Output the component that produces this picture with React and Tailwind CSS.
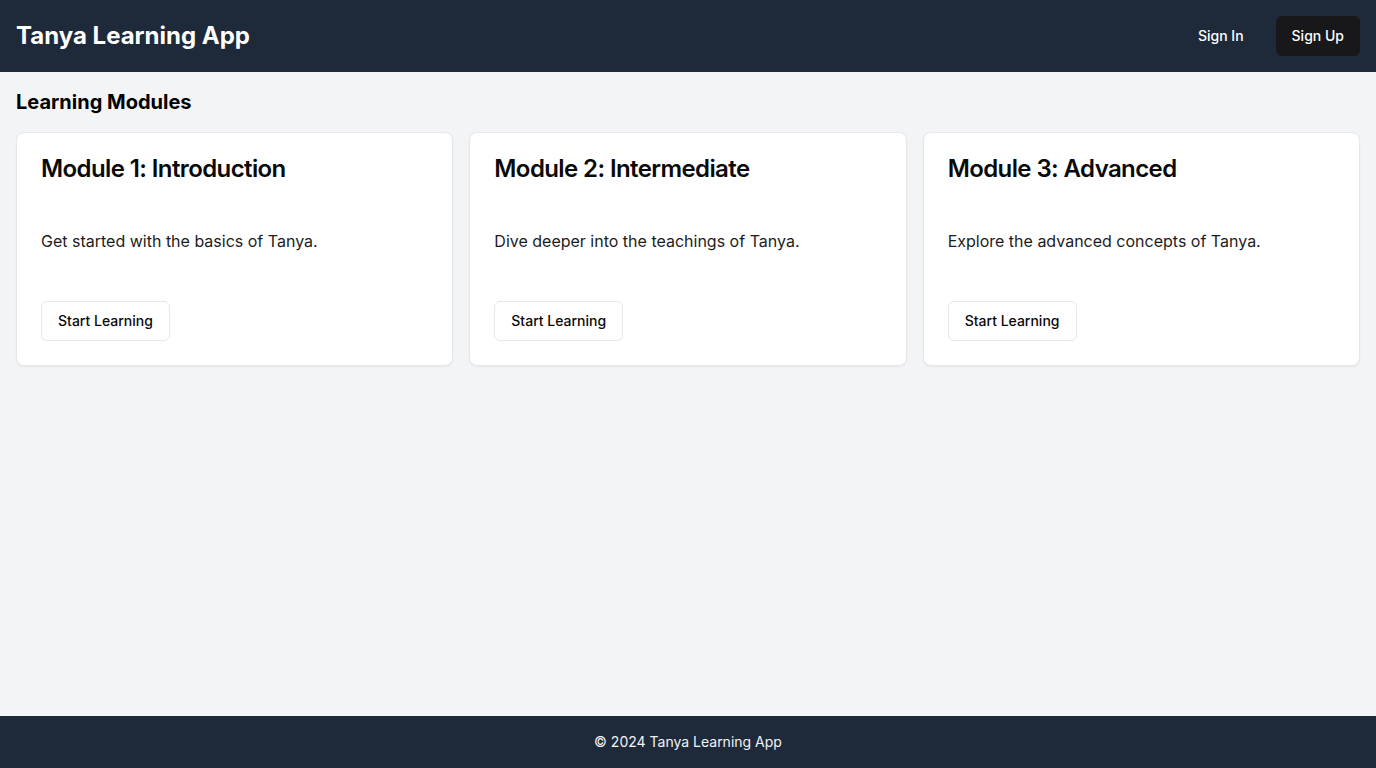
import React from "react";

const modules = [
  { title: "Module 1: Introduction", text: "Get started with the basics of Tanya." },
  { title: "Module 2: Intermediate", text: "Dive deeper into the teachings of Tanya." },
  { title: "Module 3: Advanced", text: "Explore the advanced concepts of Tanya." },
];

const ModuleCard = ({ module }) => (
  <div className="rounded-lg border border-gray-200 bg-white text-[#0a0a0a] shadow-xs">
    <div className="flex flex-col p-6">
      <h3 className="text-2xl font-semibold leading-none tracking-tight">{module.title}</h3>
    </div>
    <div className="p-6">
      <p className="text-base text-[#1c1c1c]">{module.text}</p>
    </div>
    <div className="flex items-center p-6">
      <button className="h-10 px-4 rounded-md border border-gray-200 bg-white text-sm font-medium text-[#0a0a0a]">
        Start Learning
      </button>
    </div>
  </div>
);

export default function App() {
  return (
    <div
      className="min-h-screen flex flex-col bg-gray-100"
      style={{ fontFamily: "Inter, 'Noto Sans', sans-serif" }}
    >
      <header className="bg-gray-800 text-white p-4 flex items-center justify-between">
        <h1 className="text-2xl font-bold">Tanya Learning App</h1>
        <div className="flex items-center gap-4">
          <button className="h-10 px-4 rounded-md text-sm font-medium text-white">Sign In</button>
          <button className="h-10 px-4 rounded-md text-sm font-medium bg-[#18181b] text-white">
            Sign Up
          </button>
        </div>
      </header>
      <main className="flex-1 p-4">
        <h2 className="text-xl font-bold mb-4 text-black">Learning Modules</h2>
        <div className="grid grid-cols-3 gap-4">
          {modules.map((m) => (
            <ModuleCard key={m.title} module={m} />
          ))}
        </div>
      </main>
      <footer className="bg-gray-800 text-gray-100 p-4 text-center text-sm">
        © 2024 Tanya Learning App
      </footer>
    </div>
  );
}
